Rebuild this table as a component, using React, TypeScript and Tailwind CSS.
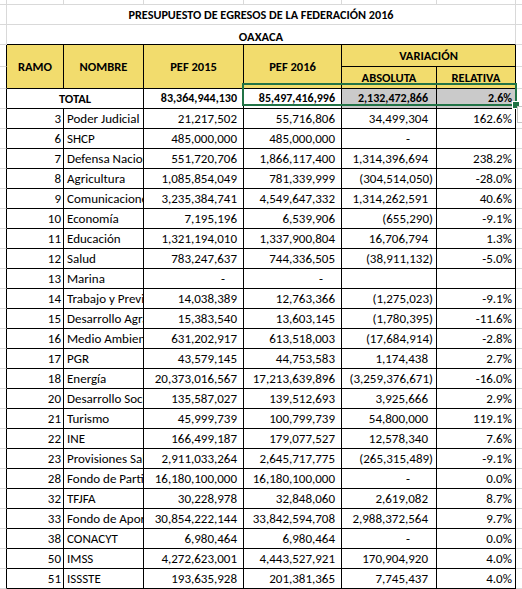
import React from 'react';

type Row = [number, string, string, string, string, string];

const rows: Row[] = [
  [3, 'Poder Judicial', '21,217,502', '55,716,806', '34,499,304', '162.6%'],
  [6, 'SHCP', '485,000,000', '485,000,000', '-', ''],
  [7, 'Defensa Nacional', '551,720,706', '1,866,117,400', '1,314,396,694', '238.2%'],
  [8, 'Agricultura', '1,085,854,049', '781,339,999', '(304,514,050)', '-28.0%'],
  [9, 'Comunicaciones', '3,235,384,741', '4,549,647,332', '1,314,262,591', '40.6%'],
  [10, 'Economía', '7,195,196', '6,539,906', '(655,290)', '-9.1%'],
  [11, 'Educación', '1,321,194,010', '1,337,900,804', '16,706,794', '1.3%'],
  [12, 'Salud', '783,247,637', '744,336,505', '(38,911,132)', '-5.0%'],
  [13, 'Marina', '-', '-', '', ''],
  [14, 'Trabajo y Previsión Social', '14,038,389', '12,763,366', '(1,275,023)', '-9.1%'],
  [15, 'Desarrollo Agrario', '15,383,540', '13,603,145', '(1,780,395)', '-11.6%'],
  [16, 'Medio Ambiente', '631,202,917', '613,518,003', '(17,684,914)', '-2.8%'],
  [17, 'PGR', '43,579,145', '44,753,583', '1,174,438', '2.7%'],
  [18, 'Energía', '20,373,016,567', '17,213,639,896', '(3,259,376,671)', '-16.0%'],
  [20, 'Desarrollo Social', '135,587,027', '139,512,693', '3,925,666', '2.9%'],
  [21, 'Turismo', '45,999,739', '100,799,739', '54,800,000', '119.1%'],
  [22, 'INE', '166,499,187', '179,077,527', '12,578,340', '7.6%'],
  [23, 'Provisiones Salariales', '2,911,033,264', '2,645,717,775', '(265,315,489)', '-9.1%'],
  [28, 'Fondo de Participaciones', '16,180,100,000', '16,180,100,000', '-', '0.0%'],
  [32, 'TFJFA', '30,228,978', '32,848,060', '2,619,082', '8.7%'],
  [33, 'Fondo de Aportaciones', '30,854,222,144', '33,842,594,708', '2,988,372,564', '9.7%'],
  [38, 'CONACYT', '6,980,464', '6,980,464', '-', '0.0%'],
  [50, 'IMSS', '4,272,623,001', '4,443,527,921', '170,904,920', '4.0%'],
  [51, 'ISSSTE', '193,635,928', '201,381,365', '7,745,437', '4.0%'],
];

// light sheet gridlines vs. black table borders
const G_RB = 'border-r border-b border-[#d9d9d9]';
const G_B = 'border-b border-[#d9d9d9]';
const EDGE = 'border-r border-b border-r-black border-b-[#d9d9d9]';
const HEAD = 'border-r border-b border-black bg-[#f2dc6d] font-bold text-center align-middle pt-[2px]';
const CELL = 'border-r border-b border-black overflow-hidden whitespace-nowrap align-bottom pb-[2px] leading-[15px]';

function Pef({ v }: { v: string }) {
  if (v === '-') return <td className={`${CELL} text-right pr-[18px]`}>-</td>;
  return <td className={`${CELL} text-right pr-[6px]`}>{v}</td>;
}

function Abs({ v }: { v: string }) {
  if (v === '-') return <td className={`${CELL} text-right pr-[26px]`}>-</td>;
  if (v.startsWith('(')) return <td className={`${CELL} text-right pr-[3px]`}>{v}</td>;
  return <td className={`${CELL} text-right pr-[8px]`}>{v}</td>;
}

export default function App() {
  return (
    <div className="relative w-[522px] h-[589px] overflow-hidden bg-white text-black font-['Carlito','Lato',sans-serif] text-[12.5px]">
      <table className="table-fixed border-separate border-spacing-0 w-[522px]">
        <colgroup>
          <col className="w-[7px]" />
          <col className="w-[57px]" />
          <col className="w-[80px]" />
          <col className="w-[100px]" />
          <col className="w-[98px]" />
          <col className="w-[95px]" />
          <col className="w-[79px]" />
          <col className="w-[6px]" />
        </colgroup>
        <tbody>
          <tr className="h-[5px]">
            <td className={G_RB} />
            <td className={G_RB} />
            <td className={G_RB} />
            <td className={G_RB} />
            <td className={G_RB} />
            <td className={G_RB} />
            <td className={G_RB} />
            <td className={G_B} />
          </tr>
          <tr className="h-[20px]">
            <td className={G_RB} />
            <td colSpan={6} className={`${G_RB} text-center font-bold align-middle leading-[15px] text-[12.2px]`}>
              PRESUPUESTO DE EGRESOS DE LA FEDERACIÓN 2016
            </td>
            <td className={G_B} />
          </tr>
          <tr className="h-[20px]">
            <td className={G_RB} />
            <td
              colSpan={6}
              className="border-r border-b border-r-[#d9d9d9] border-b-black text-center font-bold align-middle pt-[3px] leading-[15px]"
            >
              OAXACA
            </td>
            <td className={G_B} />
          </tr>
          <tr className="h-[20px]">
            <td className={EDGE} />
            <td rowSpan={2} className={HEAD}>RAMO</td>
            <td rowSpan={2} className={HEAD}>NOMBRE</td>
            <td rowSpan={2} className={HEAD}>PEF 2015</td>
            <td rowSpan={2} className={HEAD}>PEF 2016</td>
            <td colSpan={2} className={HEAD}>VARIACIÓN</td>
            <td className={G_B} />
          </tr>
          <tr className="h-[20px]">
            <td className={EDGE} />
            <td className={HEAD}>ABSOLUTA</td>
            <td className={HEAD}>RELATIVA</td>
            <td className={G_B} />
          </tr>
          <tr className="h-[20px] font-bold text-[12px]">
            <td className={EDGE} />
            <td colSpan={2} className={`${CELL} text-center text-[12.5px]`}>TOTAL</td>
            <td className={`${CELL} text-right pr-[6px]`}>83,364,944,130</td>
            <td className={`${CELL} text-right pr-[6px]`}>85,497,416,996</td>
            <td className={`${CELL} text-right pr-[8px] bg-[#cacaca]`}>2,132,472,866</td>
            <td className={`${CELL} text-right pr-[3px] bg-[#cacaca]`}>2.6%</td>
            <td className={G_B} />
          </tr>
          {rows.map(([ramo, nombre, p15, p16, abs, rel]) => (
            <tr key={ramo} className="h-[20px] text-[13px]">
              <td className={EDGE} />
              <td className={`${CELL} text-right pr-[2px]`}>{ramo}</td>
              <td className={`${CELL} text-left pl-[3px]`}>{nombre}</td>
              <Pef v={p15} />
              <Pef v={p16} />
              <Abs v={abs} />
              <td className={`${CELL} text-right pr-[3px]`}>{rel}</td>
              <td className={G_B} />
            </tr>
          ))}
          <tr className="h-[5px]">
            <td className="border-r border-[#d9d9d9]" />
            <td className="border-r border-[#d9d9d9]" />
            <td className="border-r border-[#d9d9d9]" />
            <td className="border-r border-[#d9d9d9]" />
            <td className="border-r border-[#d9d9d9]" />
            <td className="border-r border-[#d9d9d9]" />
            <td className="border-r border-[#d9d9d9]" />
            <td />
          </tr>
        </tbody>
      </table>

      {/* active selection over the total row */}
      <div className="absolute left-[242px] top-[83px] w-[275px] h-[23px] border-2 border-[#217346]" />
      <div className="absolute left-[512px] top-[101px] w-[8px] h-[8px] bg-[#217346] border border-white" />
      <div className="absolute left-[517px] top-[106px] w-[8px] h-[17px] border border-[#c6c6c6] bg-white" />
    </div>
  );
}
